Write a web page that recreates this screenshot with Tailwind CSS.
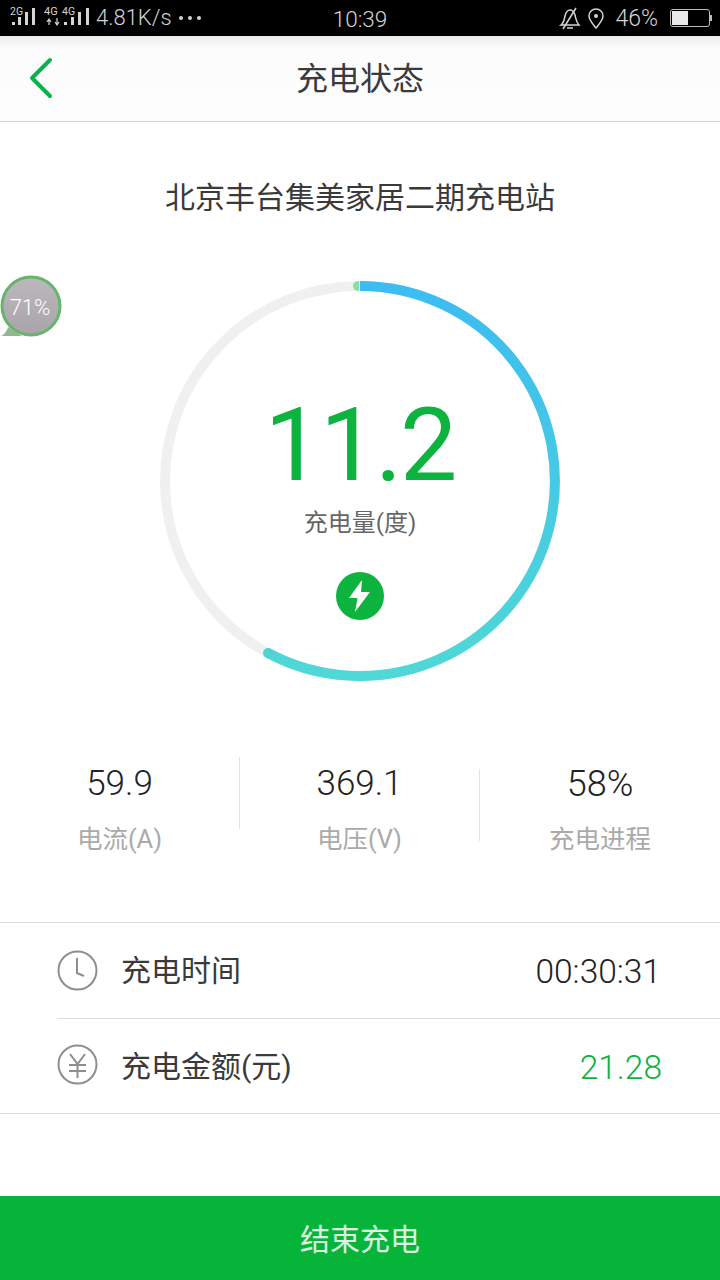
<!DOCTYPE html>
<html lang="zh-CN">
<head>
    <meta charset="UTF-8">
    <meta name="viewport" content="width=device-width, initial-scale=1.0">
    <title>充电状态</title>
    <script src="https://cdn.jsdelivr.net/npm/@tailwindcss/browser@4"></script>
</head>
<body class="bg-white">
<div class="relative w-[720px] h-[1280px] overflow-hidden flex flex-col bg-white font-['Roboto','Noto_Sans_CJK_SC',sans-serif]">

    <!-- status bar -->
    <div class="h-[36px] bg-black flex items-center justify-between pl-[8px] pr-[8px] text-[#d4d4d4] relative">
        <div class="flex items-center">
            <svg width="82" height="28" viewBox="0 0 82 28" fill="#d4d4d4" class="mt-[2px]">
                <text x="2" y="10" font-size="10.500" font-family="Roboto">2G</text>
                <rect x="4" y="17" width="3" height="3"/><rect x="10" y="12" width="3" height="8"/><rect x="17" y="7" width="3" height="13"/><rect x="24" y="3" width="3" height="17"/>
                <text x="36" y="10" font-size="11" font-family="Roboto">4G</text>
                <text x="54" y="10" font-size="10.500" font-family="Roboto">4G</text>
                <path d="M41 20v-5M39 17l2-3 2 3M49 13v6M47 17l2 3 2-3" stroke="#d4d4d4" stroke-width="1.200" fill="none"/>
                <rect x="56" y="17" width="3" height="3"/><rect x="63" y="12" width="3" height="8"/><rect x="70" y="7" width="3" height="13"/><rect x="78" y="3" width="3" height="17"/>
            </svg>
            <span class="ml-[6px] text-[22px] font-light leading-none">4.81K/s</span>
            <span class="ml-[7px] flex gap-[5px]">
                <i class="block w-[4px] h-[4px] rounded-full bg-[#d4d4d4]"></i>
                <i class="block w-[4px] h-[4px] rounded-full bg-[#d4d4d4]"></i>
                <i class="block w-[4px] h-[4px] rounded-full bg-[#d4d4d4]"></i>
            </span>
        </div>
        <span class="absolute left-0 right-0 top-[8px] text-center text-[22.500px] font-light leading-none">10:39</span>
        <div class="flex items-center">
            <svg width="22" height="24" viewBox="0 0 22 24" fill="none" stroke="#d4d4d4" stroke-width="1.500">
                <path d="M2 19c3-2 3-5 4-9 1-4 3-6 5-6s4 2 5 5c1 4 1 7 4 10z"/><path d="M8 22h6M4 23L17 2"/>
            </svg>
            <svg class="ml-[6px]" width="18" height="24" viewBox="0 0 18 24" fill="none" stroke="#d4d4d4" stroke-width="1.500">
                <path d="M9 22C5 17 2 14 2 10a7 7 0 0 1 14 0c0 4-3 7-7 12z"/><circle cx="9" cy="10" r="2" fill="#d4d4d4" stroke="none"/>
            </svg>
            <span class="ml-[10px] text-[23px] font-light leading-none">46%</span>
            <div class="ml-[12px] flex items-center">
                <div class="w-[40px] h-[18px] rounded-[3px] border border-[#bdbdbd] p-[1px]">
                    <div class="w-[16px] h-full bg-[#e8e8e8]"></div>
                </div>
                <div class="w-[2px] h-[6px] bg-[#bdbdbd]"></div>
            </div>
        </div>
    </div>

    <!-- title bar -->
    <div class="relative h-[86px] flex items-center justify-center border-b border-[#d4d4d4] bg-gradient-to-b from-[#ececec] via-[#fcfcfc] via-[15%] to-[#fdfdfd]">
        <svg class="absolute left-[28px] top-[21px]" width="26" height="42" viewBox="0 0 26 42" fill="none" stroke="#0cb14b" stroke-width="4" stroke-linecap="round" stroke-linejoin="round">
            <path d="M22 3L4 21l18 18"/>
        </svg>
        <h1 class="text-[32px] text-[#3a3a3a] leading-none">充电状态</h1>
    </div>

    <!-- station name -->
    <h2 class="mt-[58px] text-center text-[30px] leading-[36px] text-[#3a3a3a]">北京丰台集美家居二期充电站</h2>

    <!-- ring -->
    <div class="relative mt-[65px] mx-auto w-[400px] h-[400px]">
        <svg width="400" height="400" viewBox="0 0 400 400" fill="none">
            <defs>
                <linearGradient id="ring" x1="0" y1="0" x2="0" y2="1">
                    <stop offset="0" stop-color="#3cbcf2"/>
                    <stop offset="1" stop-color="#4fd8d6"/>
                </linearGradient>
            </defs>
            <circle cx="200" cy="200" r="195" stroke="#f0f0f0" stroke-width="10"/>
            <path d="M200 5A195 195 0 1 1 108 372" stroke="url(#ring)" stroke-width="10"/>
            <circle cx="108" cy="372" r="5" fill="#4fd3d4"/>
            <path d="M199 0h-1a5 5 0 0 0 0 10h1z" fill="#8fdca8"/>
        </svg>
        <div class="absolute inset-0 flex flex-col items-center">
            <div class="mt-[104px] text-[102px] leading-[120px] tracking-[-2px] text-[#0cb33f]">11.2</div>
            <div class="mt-[3px] text-[24px] leading-[30px] text-[#666]">充电量(度)</div>
            <div class="mt-[34px] w-[48px] h-[48px] rounded-full bg-[#0cb33f] flex items-center justify-center">
                <svg width="26" height="34" viewBox="0 0 26 34" fill="#fff">
                    <path d="M15 1L2 19h8.500L8 33l15-20h-9z"/>
                </svg>
            </div>
        </div>
    </div>

    <!-- floating bubble -->
    <svg class="absolute left-0 top-[274px]" width="64" height="64" viewBox="0 0 64 64">
        <defs>
            <linearGradient id="bubble" x1="0" y1="0" x2="0" y2="1">
                <stop offset="0" stop-color="#bdb8bd"/>
                <stop offset="1" stop-color="#a9a4a9"/>
            </linearGradient>
        </defs>
        <path d="M1 62c3-1 6-5 7-9l14 9z" fill="#8fb890"/>
        <circle cx="31" cy="32" r="29" fill="url(#bubble)" stroke="#66b56b" stroke-width="3"/>
    </svg>
    <span class="absolute left-[0px] top-[294px] w-[60px] text-center text-white text-[22px] leading-[28px] font-light">71%</span>

    <!-- stats -->
    <div class="mt-[76px] grid grid-cols-3">
        <div class="flex flex-col items-center border-r border-[#e2e2e2] h-[72px]">
            <span class="text-[35px] leading-[40px] font-light text-[#222] mt-[7px]">59.9</span>
            <span class="mt-[20px] text-[25.500px] leading-[30px] text-[#aaa] whitespace-nowrap">电流(A)</span>
        </div>
        <div class="flex flex-col items-center relative border-r border-[#e2e2e2] h-[72px] mt-[12px]">
            <span class="text-[35px] leading-[40px] font-light text-[#222] -mt-[5px]">369.1</span>
            <span class="mt-[20px] text-[25.500px] leading-[30px] text-[#aaa] whitespace-nowrap">电压(V)</span>
        </div>
        <div class="flex flex-col items-center">
            <span class="text-[36px] leading-[40px] font-light text-[#222] mt-[7px]">58%</span>
            <span class="mt-[20px] text-[25.500px] leading-[30px] text-[#aaa] whitespace-nowrap">充电进程</span>
        </div>
    </div>

    <!-- details -->
    <div class="mt-[68px] border-y border-[#dedede] pl-[57px]">
        <div class="h-[96px] flex items-center border-b border-[#dedede]">
            <svg width="41" height="41" viewBox="0 0 41 41" fill="none" stroke="#8e8e8e" stroke-width="2">
                <circle cx="20.500" cy="20.500" r="19"/>
                <path d="M20 8v15l7 3"/>
            </svg>
            <span class="ml-[23px] text-[30px] text-[#3a3a3a]">充电时间</span>
            <span class="ml-auto mr-[59px] mt-[4px] text-[33.500px] font-light text-[#222]">00:30:31</span>
        </div>
        <div class="h-[94px] flex items-center">
            <svg class="-mt-[4px]" width="41" height="41" viewBox="0 0 41 41" fill="none" stroke="#8e8e8e" stroke-width="2">
                <circle cx="20.500" cy="20.500" r="19"/>
                <path d="M13 10l7.500 10L28 10M12 21h17M12 27h17M20.500 20v14"/>
            </svg>
            <span class="ml-[23px] text-[30px] text-[#3a3a3a]">充电金额(元)</span>
            <span class="ml-auto mr-[58px] mt-[4px] text-[33.500px] font-light text-[#0cb33f]">21.28</span>
        </div>
    </div>

    <!-- action -->
    <button class="mt-auto h-[84px] bg-[#07b43a] text-white/85 text-[30px]"><span class="relative top-[1px]">结束充电</span></button>
</div>
</body>
</html>
